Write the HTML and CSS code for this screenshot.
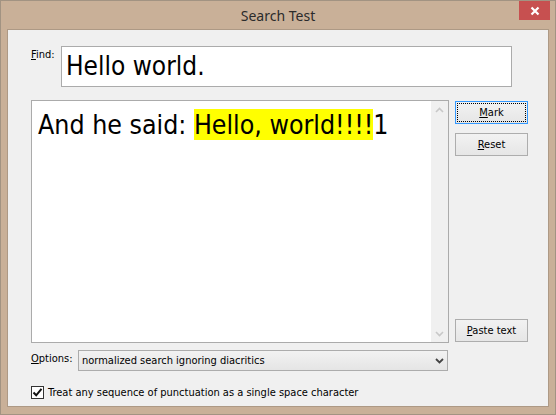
FILE: index.html
```html
<!DOCTYPE html>
<html lang="en">
<head>
  <meta charset="UTF-8" />
  <title>Search Test</title>
  <link rel="stylesheet" href="styles.css">
</head>
<body>

  <div class="window">
    <div class="titlebar">
      <span></span>
      <span class="title">Search Test</span>
      <span class="close">
        <svg width="10" height="10" viewBox="0 0 10 10">
          <path d="M1.5 1.5 L8.5 8.5 M8.5 1.5 L1.5 8.5" stroke="#fff" stroke-width="2.2" />
        </svg>
      </span>
    </div>

    <div class="client">
      <div class="findrow">
        <label class="lbl findlbl"><u>F</u>ind:</label>
        <div class="findbox">Hello world.</div>
      </div>

      <div class="mainrow">
        <div class="textarea">
          <div class="content">And he said: <mark>Hello, world!!!!</mark>1</div>
          <div class="scrollbar">
            <svg width="9" height="6" viewBox="0 0 9 6"><path d="M1 5 L4.5 1.5 L8 5" fill="none" stroke="#c8c8c8" stroke-width="1.6" /></svg>
            <svg width="9" height="6" viewBox="0 0 9 6"><path d="M1 1 L4.5 4.5 L8 1" fill="none" stroke="#c8c8c8" stroke-width="1.6" /></svg>
          </div>
        </div>
        <div class="buttons">
          <button class="btn default"><span class="focus"><u>M</u>ark</span></button>
          <button class="btn"><u>R</u>eset</button>
          <button class="btn paste"><u>P</u>aste text</button>
        </div>
      </div>

      <div class="optrow">
        <label class="lbl"><u>O</u>ptions:</label>
        <div class="select">
          <span>normalized search ignoring diacritics</span>
          <svg width="9" height="6" viewBox="0 0 9 6"><path d="M1 1 L4.5 4.5 L8 1" fill="none" stroke="#444" stroke-width="1.8" /></svg>
        </div>
      </div>

      <div class="checkrow">
        <span class="checkbox">
          <svg width="11" height="11" viewBox="0 0 11 11"><path d="M1.5 5.5 L4.2 8.3 L9.5 1.8" fill="none" stroke="#111" stroke-width="2" /></svg>
        </span>
        <span class="lbl">Treat any sequence of punctuation as a single space character</span>
      </div>
    </div>
  </div>

</body>
</html>
```

FILE: styles.css
```css
html, body {
  margin: 0;
  background: #c9b098;
}
.window {
  box-sizing: border-box;
  width: 556px;
  height: 415px;
  border: 1px solid #a29382;
  background: #c9b098;
  padding: 0 6px 7px 6px;
  display: flex;
  flex-direction: column;
}
.titlebar {
  height: 28px;
  display: grid;
  grid-template-columns: 1fr auto 1fr;
}
.title {
  font-family: "Noto Sans", sans-serif;
  font-size: 14px;
  color: #2b2b2b;
  line-height: 29px;
}
.close {
  justify-self: end;
  width: 31px;
  height: 19px;
  margin-right: -1px;
  background: #c75050;
  display: flex;
  align-items: center;
  justify-content: center;
}
.client {
  flex: 1;
  border: 1px solid #ad9985;
  background: #f0f0f0;
  padding: 16px 0 0 23px;
  font-family: "DejaVu Sans Condensed", "DejaVu Sans", sans-serif;
  font-stretch: condensed;
}
.lbl {
  font-size: 11px;
  color: #000;
}
.findrow {
  display: flex;
}
.findlbl {
  width: 30px;
  margin-top: 2px;
}
.findbox {
  box-sizing: border-box;
  width: 451px;
  height: 41px;
  border: 1px solid #ababab;
  background: #fff;
  font-size: 26px;
  line-height: 35px;
  padding: 2px 0 0 4px;
}
.mainrow {
  display: flex;
  margin-top: 13px;
}
.textarea {
  box-sizing: border-box;
  width: 418px;
  height: 243px;
  border: 1px solid #ababab;
  background: #fff;
  display: flex;
}
.content {
  flex: 1;
  padding: 6px 0 0 6px;
  font-size: 26.5px;
  line-height: 35px;
}
mark {
  background: #ffff00;
  color: #000;
}
.scrollbar {
  width: 17px;
  background: #f0f0f0;
  display: flex;
  flex-direction: column;
  justify-content: space-between;
  align-items: center;
  padding: 6px 0 5px;
}
.buttons {
  display: flex;
  flex-direction: column;
  gap: 9px;
  margin: 1px 0 1px 6px;
}
.btn {
  box-sizing: border-box;
  width: 73px;
  height: 23px;
  border: 1px solid #adadad;
  background: linear-gradient(#f2f2f2, #e6e6e6);
  font-family: inherit;
  font-stretch: condensed;
  font-size: 11px;
  color: #000;
  padding: 0;
}
.btn.default {
  border-color: #3399ff;
  padding: 2px;
}
.focus {
  display: flex;
  align-items: center;
  justify-content: center;
  height: 100%;
  outline: 1px dotted #000;
}
.btn.paste {
  margin-top: auto;
}
.optrow {
  display: flex;
  margin-top: 7px;
}
.optrow .lbl {
  width: 47px;
  margin-top: 2px;
}
.select {
  box-sizing: border-box;
  width: 370px;
  height: 21px;
  border: 1px solid #acacac;
  background: linear-gradient(#f2f2f2, #e5e5e5);
  display: flex;
  align-items: center;
  justify-content: space-between;
  padding: 0 3px 0 3px;
  font-size: 11px;
}
.checkrow {
  display: flex;
  align-items: center;
  gap: 4px;
  margin-top: 15px;
}
.checkbox {
  box-sizing: border-box;
  width: 13px;
  height: 13px;
  border: 1px solid #333;
  background: #fff;
  display: flex;
  align-items: center;
  justify-content: center;
}
```
